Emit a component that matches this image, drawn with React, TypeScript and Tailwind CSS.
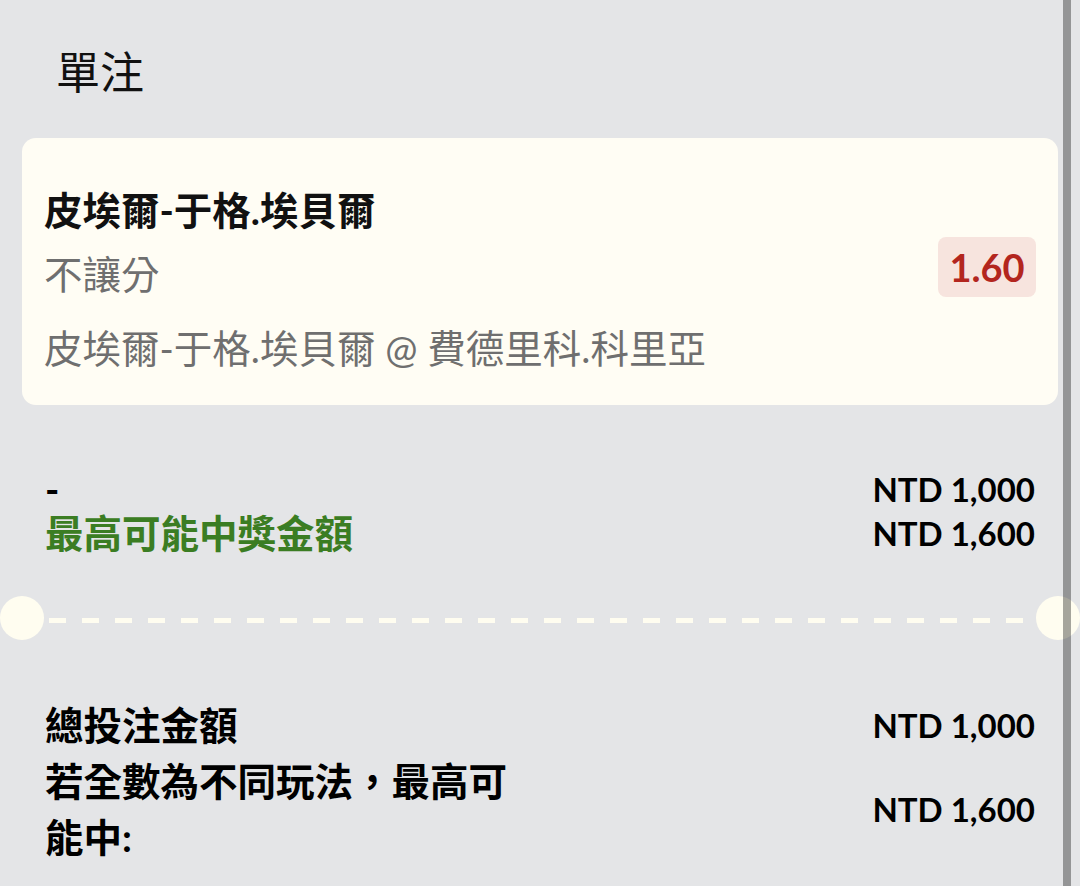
const fontStack = "font-['Lato','Noto_Sans_CJK_TC','Noto_Sans',sans-serif]"

function Row({ label, amount }: { label: React.ReactNode; amount: string }) {
  return (
    <div className="flex items-center justify-between">
      <div className="max-w-[475px]">{label}</div>
      <div className="text-[33px] font-bold text-black whitespace-nowrap">{amount}</div>
    </div>
  )
}

export default function App() {
  return (
    <div className={`relative h-[886px] w-full overflow-hidden bg-[#e4e5e7] ${fontStack}`}>
      <div className="px-[22px]">
        <div className="pl-[34px] pt-[42px] text-[44px] leading-[60px] text-[#111]">單注</div>

        {/* bet card */}
        <div className="mt-[36px] rounded-[14px] bg-[#fffdf4] px-[22px] pt-[40px] pb-[25px]">
          <div className="text-[38.5px] font-bold leading-[64px] text-[#111]">皮埃爾-于格.埃貝爾</div>
          <div className="flex items-center justify-between">
            <div className="text-[38.5px] leading-[64px] text-[#6f6f6f]">不讓分</div>
            <div className="-mt-[14px] flex h-[60px] w-[98px] items-center justify-center rounded-[8px] bg-[#f7e4de] text-[38px] font-bold text-[#b3261e]">
              1.60
            </div>
          </div>
          <div className="mt-[10px] text-[38.5px] leading-[64px] text-[#6f6f6f]">
            皮埃爾-于格.埃貝爾 @ 費德里科.科里亞
          </div>
        </div>

        <div className="mt-[62px] px-[23px] text-[38.5px] font-bold leading-[44px]">
          <Row label={<span className="text-black">-</span>} amount="NTD 1,000" />
          <Row label={<span className="text-[#3b7d23]">最高可能中獎金額</span>} amount="NTD 1,600" />
        </div>
      </div>

      {/* tear line */}
      <div className="mt-[41px] flex items-center">
        <div className="h-[44px] w-[44px] shrink-0 rounded-full bg-[#fffdf0]" />
        <div className="mx-[5px] mt-[5px] h-[5px] flex-1 bg-[repeating-linear-gradient(to_right,#fffdf0_0_17px,transparent_17px_33px)]" />
        <div className="h-[44px] w-[44px] shrink-0 rounded-full bg-[#fffdf0]" />
      </div>

      <div className="mt-[57px] px-[45px] text-[38.5px] font-bold leading-[56px] text-black">
        <Row label="總投注金額" amount="NTD 1,000" />
        <Row label="若全數為不同玩法，最高可能中:" amount="NTD 1,600" />
      </div>

      {/* scrollbar */}
      <div className="absolute top-0 right-[9px] h-full w-[8px] bg-black/35" />
    </div>
  )
}
